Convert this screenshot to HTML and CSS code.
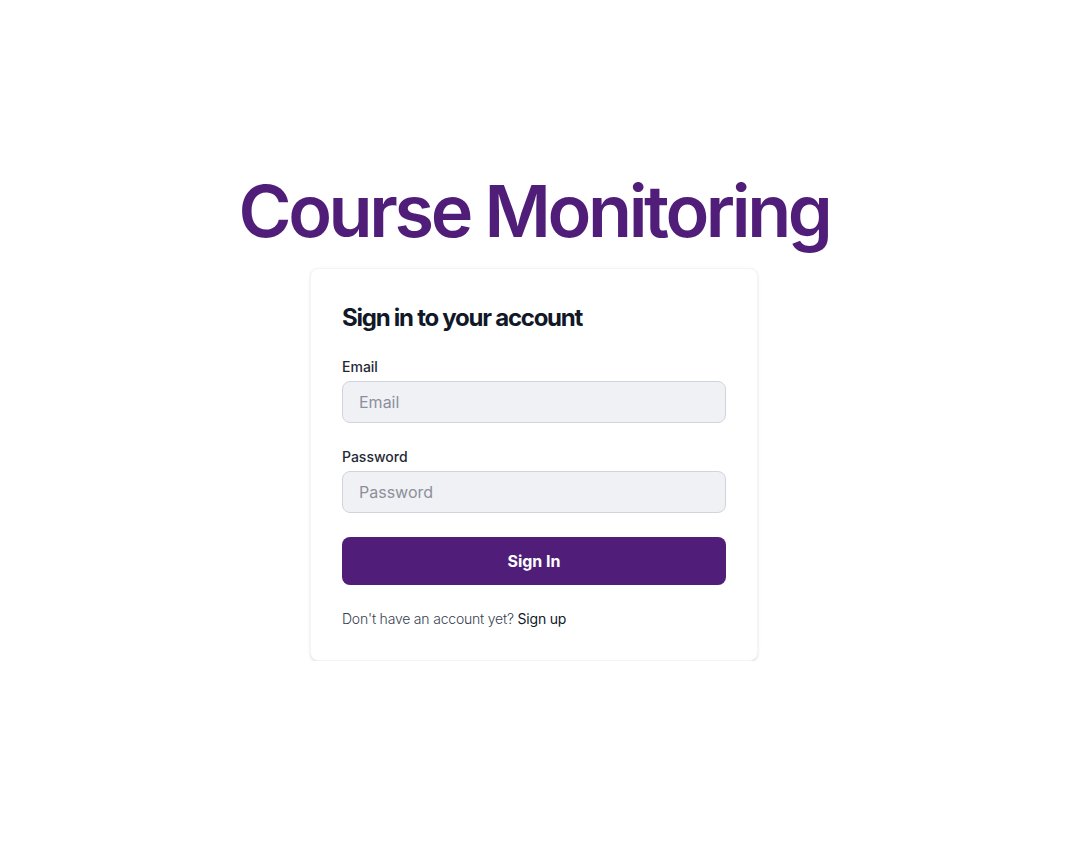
FILE: index.html
```html
<!DOCTYPE html>
<html lang="en">
<head>
<meta charset="utf-8">
<title>Course Monitoring</title>
<link rel="stylesheet" href="styles.css">
</head>
<body>
<main class="page">
  <h1 class="brand">Course Monitoring</h1>
  <div class="card">
    <h2 class="card-title">Sign in to your account</h2>
    <form class="form">
      <div class="field">
        <label class="label" for="email">Email</label>
        <input class="input" id="email" type="email" placeholder="Email">
      </div>
      <div class="field">
        <label class="label" for="password">Password</label>
        <input class="input" id="password" type="password" placeholder="Password">
      </div>
      <button class="btn" type="button">Sign In</button>
      <p class="note">Don't have an account yet? <a class="link" href="#">Sign up</a></p>
    </form>
  </div>
</main>
</body>
</html>
```
FILE: styles.css
```css
* { box-sizing: border-box; }
html, body { margin: 0; padding: 0; background: #fff; }
body { font-family: Inter, "Noto Sans", sans-serif; color: #111827; }
.page {
  display: flex;
  flex-direction: column;
  align-items: center;
  padding-top: 168px;
  padding-right: 22px;
}
.brand {
  margin: 0 0 14px;
  font-size: 72px;
  line-height: 86px;
  font-weight: 600;
  letter-spacing: -3.4px;
  color: #501e78;
}
.card {
  width: 448px;
  background: #fff;
  border-radius: 8px;
  box-shadow: 0 1px 3px rgba(0,0,0,0.1), 0 1px 2px -1px rgba(0,0,0,0.1);
  border: 1px solid #f3f4f6;
  padding: 31px;
}
.card-title {
  margin: 0;
  font-size: 24px;
  line-height: 36px;
  font-weight: 700;
  letter-spacing: -1.25px;
  color: #111827;
}
.form { display: flex; flex-direction: column; gap: 24px; margin-top: 21px; }
.field { display: flex; flex-direction: column; }
.label {
  font-size: 14px;
  line-height: 20px;
  font-weight: 500;
  color: #1f2937;
  margin-bottom: 4px;
}
.input {
  height: 42px;
  width: 100%;
  border: 1px solid #d1d5db;
  border-radius: 8px;
  background: #f0f1f5;
  padding: 0 16px;
  font-family: inherit;
  font-size: 16px;
  color: #111827;
}
.input::placeholder { color: #8b909a; }
.btn {
  height: 48px;
  width: 100%;
  border: none;
  border-radius: 8px;
  background: #501e78;
  color: #fff;
  font-family: inherit;
  font-size: 16px;
  font-weight: 700;
}
.note {
  margin: 0;
  font-size: 14px;
  line-height: 20px;
  font-weight: 300;
  letter-spacing: -0.2px;
  color: #374151;
}
.link { color: #111827; text-decoration: none; font-weight: 400; }
```
